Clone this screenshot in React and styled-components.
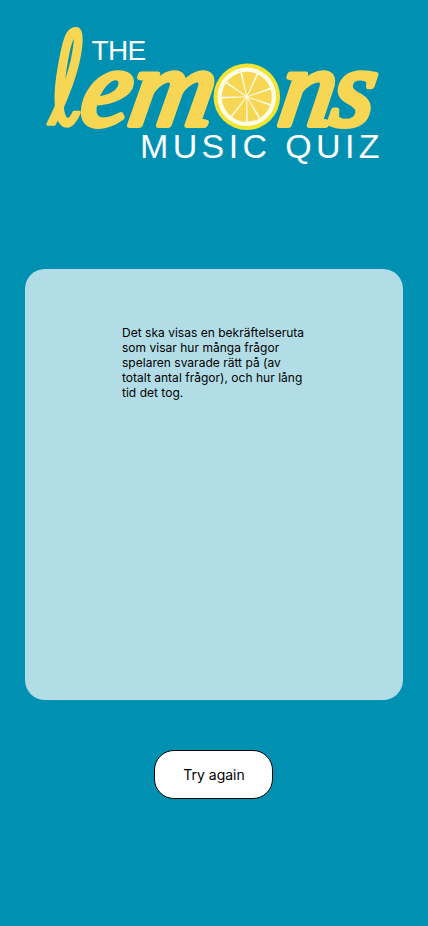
import React from 'react';
import styled, { createGlobalStyle } from 'styled-components';

const GlobalStyle = createGlobalStyle`
  *, *::before, *::after { box-sizing: border-box; }
  body { margin: 0; background: #0091b2; }
`;

const Page = styled.main`
  display: flex;
  flex-direction: column;
  align-items: center;
  min-height: 926px;
  background: #0091b2;
  font-family: Inter, sans-serif;
  color: #000;
`;

const Logo = styled.svg`
  display: block;
  width: 428px;
  height: 180px;
  flex: none;
`;

const Caption = styled.text`
  font-family: 'Liberation Sans', Arial, sans-serif;
  font-size: ${({ $size }) => $size}px;
  letter-spacing: ${({ $spacing }) => $spacing}px;
  fill: #fff;
`;

const Script = styled.text`
  font-family: 'Liberation Serif', serif;
  font-style: italic;
  font-size: 110px;
  fill: #f7d654;
  stroke: #f7d654;
  stroke-width: ${({ $stroke = 6 }) => $stroke}px;
  stroke-linejoin: round;
  stroke-linecap: round;
`;

const LoopedInitial = styled(Script)`
  font-family: 'DejaVu Serif', 'DejaVu Sans', serif;
  font-style: normal;
  font-size: 122px;
`;

const Card = styled.section`
  width: 378px;
  height: 431px;
  margin-top: 89px;
  padding: 56px 72px 0 97px;
  border-radius: 20px;
  background: #b2dde6;
`;

const Message = styled.p`
  width: 190px;
  margin: 0;
  font-size: 12px;
  line-height: 15px;
  letter-spacing: 0.02px;
  white-space: pre-line;
`;

const Button = styled.button`
  width: 119px;
  height: 49px;
  margin-top: 50px;
  margin-right: 1px;
  padding: 0 0 0 1px;
  border: 1px solid #000;
  border-radius: 20px;
  background: #fff;
  color: #000;
  font: 14px Inter, sans-serif;
`;

const seams = [-145, -103, -65, -19, 19, 59, 90, 128, 178];

function LemonSlice() {
  return (
    <g transform="translate(246.8 96.8)">
      <circle r="33.3" fill="#f2e532" />
      <circle r="29.3" fill="#fffce8" />
      <circle r="25" fill="#f7d654" />
      {seams.map((angle) => (
        <path key={angle} d="M0-.4L25-.9V.9L0 .4Z" fill="#fffce8" transform={`rotate(${angle})`} />
      ))}
      <circle r="1.8" fill="#fffce8" />
    </g>
  );
}

export default function App() {
  return (
    <>
      <GlobalStyle />
      <Page>
        <Logo viewBox="0 0 428 180" role="img" aria-label="The Lemons Music Quiz">
          <LoopedInitial $stroke={3.5} transform="translate(49 123.5) scale(.73 1.05) skewX(-1)">ℓ</LoopedInitial>
          <Script transform="translate(0 125) skewX(-9)">
            <tspan x="78">e</tspan>
          </Script>
          <Script transform="translate(126 125) scale(1.06 1) skewX(-9)">m</Script>
          <Script transform="translate(0 125) skewX(-9)">
            <tspan x="276">n</tspan>
            <tspan x="328">s</tspan>
          </Script>
          <LemonSlice />
          <Caption $size={28} $spacing={-0.6} x="91.5" y="60">THE</Caption>
          <Caption $size={34} x="140" y="158" textLength="239.5">MUSIC QUIZ</Caption>
        </Logo>
        <Card>
          <Message>
            {'Det ska visas en bekräftelseruta\nsom visar hur många frågor\nspelaren svarade rätt på (av\ntotalt antal frågor), och hur lång\ntid det tog.'}
          </Message>
        </Card>
        <Button type="button">Try again</Button>
      </Page>
    </>
  );
}
